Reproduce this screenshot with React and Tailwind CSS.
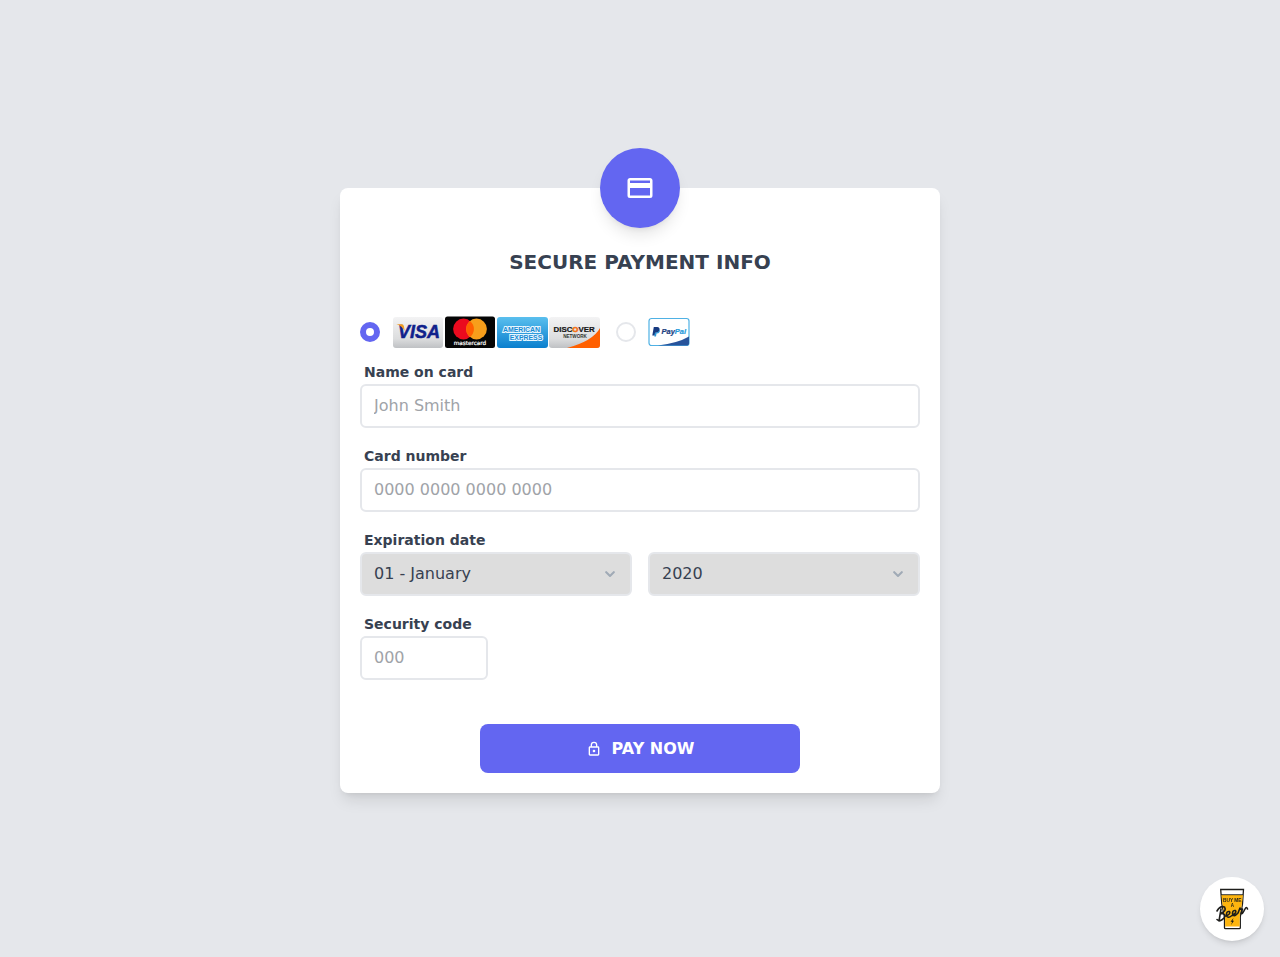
import React from "react";

const logoFont = { fontFamily: '"Liberation Sans", Arial, sans-serif' };
const roundFont = { fontFamily: '"DejaVu Sans", Verdana, sans-serif' };

function CardIcon({ className }) {
  return (
    <svg viewBox="0 0 24 24" className={className} fill="currentColor" aria-hidden="true">
      <path d="M20,8H4V6H20M20,18H4V12H20M20,4H4C2.89,4 2,4.89 2,6V18A2,2 0 0,0 4,20H20A2,2 0 0,0 22,18V6C22,4.89 21.1,4 20,4Z" />
    </svg>
  );
}

function LockIcon({ className }) {
  return (
    <svg viewBox="0 0 24 24" className={className} fill="currentColor" aria-hidden="true">
      <path d="M12,17C10.89,17 10,16.1 10,15C10,13.89 10.89,13 12,13A2,2 0 0,1 14,15A2,2 0 0,1 12,17M18,20V10H6V20H18M18,8A2,2 0 0,1 20,10V20A2,2 0 0,1 18,22H6C4.89,22 4,21.1 4,20V10C4,8.89 4.89,8 6,8H7V6A5,5 0 0,1 12,1A5,5 0 0,1 17,6V8H18M12,3A3,3 0 0,0 9,6V8H15V6A3,3 0 0,0 12,3Z" />
    </svg>
  );
}

function CardBrands() {
  return (
    <svg viewBox="0 0 208 32" className="h-8 w-52" role="img" aria-label="Visa, Mastercard, American Express, Discover">
      <defs>
        <linearGradient id="silver" x1="0" y1="0" x2="0" y2="1">
          <stop offset="0" stopColor="#f3f3f4" />
          <stop offset="0.7" stopColor="#dcddde" />
          <stop offset="1" stopColor="#bfc1c4" />
        </linearGradient>
        <linearGradient id="amex" x1="0" y1="0" x2="0" y2="1">
          <stop offset="0" stopColor="#5abfee" />
          <stop offset="1" stopColor="#0a7fce" />
        </linearGradient>
        <clipPath id="discover">
          <rect x="157" y="1" width="51" height="31" rx="3" />
        </clipPath>
      </defs>

      <rect x="1" y="1" width="50" height="31" rx="3" fill="url(#silver)" />
      <text x="6" y="21.500" fontSize="18" fontWeight="700" fontStyle="italic" fill="#10218b" stroke="#10218b" strokeWidth="0.500" style={logoFont}>VISA</text>
      <path d="M4.500 8.300H9.800Q11.600 8.500 11.900 10.300L12.700 15Q10 10 4.500 8.300Z" fill="#f39a1f" />

      <rect x="53" y="0.500" width="50" height="31.500" rx="2.500" fill="#050505" />
      <circle cx="71.500" cy="13" r="10.400" fill="#eb0a1e" />
      <circle cx="84.500" cy="13" r="10.400" fill="#f79e1b" />
      <path d="M78 4.880A10.400 10.400 0 0 1 78 21.120A10.400 10.400 0 0 1 78 4.880Z" fill="#ff5f00" />
      <text x="78" y="28.800" textAnchor="middle" fontSize="5.700" fill="#fff" stroke="#fff" strokeWidth="0.200" style={roundFont}>mastercard</text>

      <rect x="105" y="1" width="51" height="31" rx="3" fill="url(#amex)" />
      <g fill="#1689d2" stroke="#e8f7ff" strokeWidth="2" paintOrder="stroke" fontWeight="700" style={logoFont}>
        <text x="129.500" y="15.500" textAnchor="middle" fontSize="6.900">AMERICAN</text>
        <text x="134" y="23.500" textAnchor="middle" fontSize="6.900">EXPRESS</text>
      </g>

      <g clipPath="url(#discover)">
        <rect x="157" y="1" width="51" height="31" fill="url(#silver)" />
        <path d="M208 12Q201 25 175 32H208Z" fill="#ff6000" />
      </g>
      <text x="161.500" y="15.500" fontSize="7.900" fontWeight="700" fill="#151515" stroke="#151515" strokeWidth="0.200" style={logoFont}>
        DISC<tspan fill="#f47216" stroke="#f47216" strokeWidth="0.600">O</tspan>VER
      </text>
      <text x="183" y="21.500" textAnchor="middle" fontSize="4.600" fontWeight="700" fill="#333" style={logoFont}>NETWORK</text>
    </svg>
  );
}

function PayPalCard() {
  return (
    <svg viewBox="0 0 42 32" className="h-8 w-[42px]" role="img" aria-label="PayPal">
      <rect x="1" y="2.500" width="40" height="27" rx="2.500" fill="#fff" stroke="#4fb1e4" strokeWidth="1.200" />
      <path d="M41 20.500V27.500Q41 29.500 39 29.500H10Q30 27 41 20.500Z" fill="#27539b" />
      <path d="M5.800 11H9.300Q12 11.300 11.500 14Q11 16.700 8.200 16.700H7.300L6.700 19.500H4.300Z" fill="#173a80" />
      <path d="M11.800 12.500Q12.700 17.500 8.500 17.500L8 20.500H6.300L6.800 17L8.600 16.600Q11.500 16 11.800 12.500Z" fill="#2997d8" />
      <text x="13.500" y="17.500" fontSize="7.500" fontWeight="700" fontStyle="italic" fill="#20417f" stroke="#20417f" strokeWidth="0.200" style={logoFont}>
        Pay<tspan fill="#2a9bdb" stroke="#2a9bdb">Pal</tspan>
      </text>
    </svg>
  );
}

function BeerIcon({ className }) {
  return (
    <svg viewBox="0 0 44 50" className={className} aria-hidden="true">
      <path d="M10.700 5.500H33.500L32.500 20L30.300 33V43.700Q30.300 44.700 29.300 44.700H15.500Q14.500 44.700 14.500 43.700V33L11.800 20Z" fill="#fff" stroke="#1d1d1b" strokeWidth="1.300" />
      <path d="M11.400 11H32.900L31.900 20L29.700 33V42.500H15.100V33L12.400 20Z" fill="#fdb50f" />
      <path d="M11 10.700H33" stroke="#1d1d1b" strokeWidth="0.900" />
      <g fill="#1d1d1b" fontWeight="700" textAnchor="middle" style={logoFont}>
        <text x="22.300" y="18.300" fontSize="4.800">BUY ME</text>
        <text x="22.300" y="22.800" fontSize="4.500">A</text>
      </g>
      <path
        d="M11 25L9 37M7 27Q10 21.500 14.500 23Q17 27 10.500 29.500Q17 29.500 14 34Q10 38.500 7 35.500M16 32Q21 30 19.500 27.500Q16.500 27 16.500 30.500Q17 35.500 22 31.500Q27 29 25.500 26.500Q22.500 26 22.500 29.500Q23.500 34 28 29L30 24Q30 26 32.500 25L31 29.500Q32 31 35 25Q36.500 22 37.500 25"
        fill="none"
        stroke="#1d1d1b"
        strokeWidth="1.600"
        strokeLinecap="round"
        strokeLinejoin="round"
      />
      <path d="M23.500 34L20.500 37.700H22.200L21 41L24 36.800H22.500Z" fill="#1d1d1b" />
    </svg>
  );
}

const radioClass =
  "h-5 w-5 shrink-0 cursor-pointer appearance-none rounded-full border-2 border-gray-200 bg-white checked:border-6 checked:border-[#6366f1]";
const labelClass = "block pl-1 text-sm leading-6 font-bold";
const inputClass =
  "block w-full rounded-md border-2 border-gray-200 bg-white px-3 py-2 text-base text-[#374151] placeholder:text-[#a0a3a8] focus:border-[#6366f1] focus:outline-none";

function Field({ id, label, placeholder, className }) {
  return (
    <div>
      <label htmlFor={id} className={labelClass}>{label}</label>
      <div className={className}>
        <input id={id} type="text" placeholder={placeholder} className={inputClass} />
      </div>
    </div>
  );
}

function Select({ id, label, options }) {
  return (
    <div className="relative">
      <select
        id={id}
        aria-label={label}
        className="block h-11 w-full cursor-pointer appearance-none rounded-md border-2 border-gray-200 bg-[#dddddd] pr-10 pl-3 text-base text-[#374151] focus:border-[#6366f1] focus:outline-none"
      >
        {options.map((o) => (
          <option key={o}>{o}</option>
        ))}
      </select>
      <svg viewBox="0 0 24 24" className="pointer-events-none absolute top-2.5 right-2.5 h-6 w-6 fill-[#a0aab6]" aria-hidden="true">
        <path d="M15.300 9.300a1 1 0 0 1 1.400 1.400l-4 4a1 1 0 0 1-1.400 0l-4-4a1 1 0 0 1 1.400-1.400l3.300 3.290 3.300-3.300z" />
      </svg>
    </div>
  );
}

const months = [
  "January", "February", "March", "April", "May", "June",
  "July", "August", "September", "October", "November", "December",
].map((m, i) => `${String(i + 1).padStart(2, "0")} - ${m}`);
const years = Array.from({ length: 10 }, (_, i) => String(2020 + i));

export default function App() {
  return (
    <div className="flex min-h-screen items-center justify-center bg-[#e5e7eb] px-5 pt-16 pb-10 font-['DejaVu_Sans',sans-serif] text-[#374151]">
      <main className="w-full max-w-[600px] rounded-lg bg-white p-5 shadow-lg">
        <div className="-mt-15 flex justify-center pb-5">
          <div className="flex h-20 w-20 items-center justify-center rounded-full bg-[#6366f1] text-white shadow-lg">
            <CardIcon className="h-[30px] w-[30px]" />
          </div>
        </div>
        <h1 className="mb-10 text-center text-xl font-bold uppercase">Secure payment info</h1>
        <form onSubmit={(e) => e.preventDefault()}>
          <div className="mb-3 flex gap-4">
            <label className="flex cursor-pointer items-center gap-3">
              <input type="radio" name="type" defaultChecked className={radioClass} />
              <CardBrands />
            </label>
            <label className="flex cursor-pointer items-center gap-3">
              <input type="radio" name="type" className={radioClass} />
              <PayPalCard />
            </label>
          </div>
          <div className="flex flex-col gap-4">
            <Field id="name" label="Name on card" placeholder="John Smith" />
            <Field id="number" label="Card number" placeholder="0000 0000 0000 0000" />
            <div>
              <label htmlFor="month" className={labelClass}>Expiration date</label>
              <div className="grid grid-cols-2 gap-4">
                <Select id="month" label="Expiration month" options={months} />
                <Select id="year" label="Expiration year" options={years} />
              </div>
            </div>
            <Field id="code" label="Security code" placeholder="000" className="w-32" />
          </div>
          <button
            type="submit"
            className="mx-auto mt-11 flex h-[49px] w-full max-w-xs items-center justify-center gap-2.5 rounded-lg bg-[#6366f1] font-semibold text-white hover:bg-[#4f46e5]"
          >
            <LockIcon className="h-4 w-4" />
            PAY NOW
          </button>
        </form>
      </main>
      <a
        href="#beer"
        aria-label="Buy me a beer"
        className="fixed right-4 bottom-4 flex h-16 w-16 items-center justify-center rounded-full bg-white shadow-md"
      >
        <BeerIcon className="h-[50px] w-11" />
      </a>
    </div>
  );
}
